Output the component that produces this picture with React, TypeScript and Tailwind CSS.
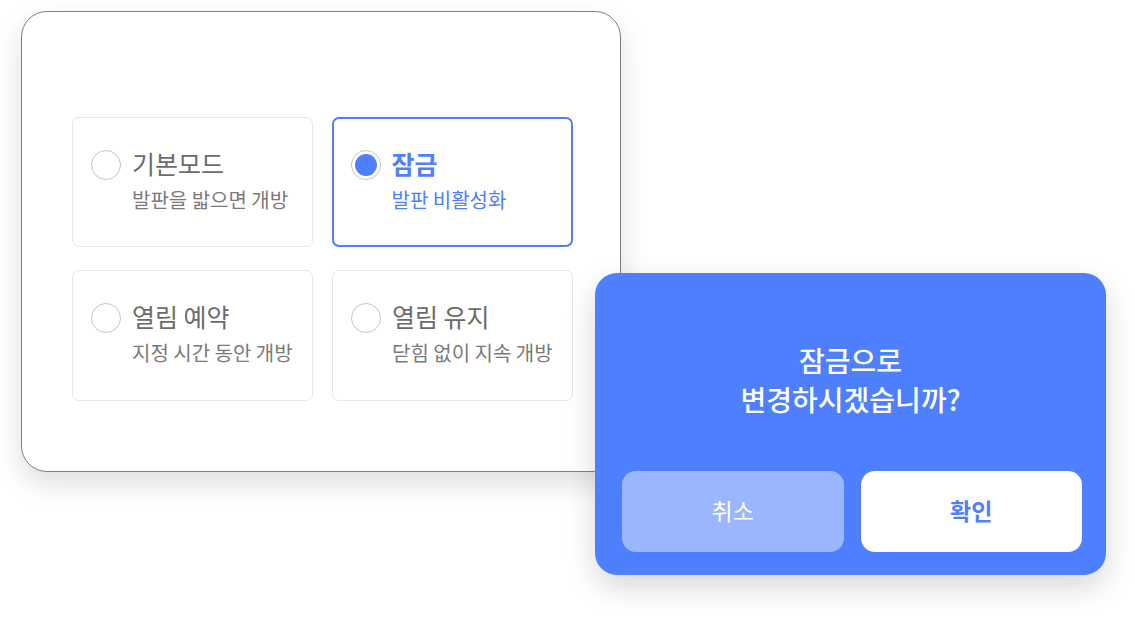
import React from "react";

type Opt = { title: string; desc: string; selected?: boolean };

const options: Opt[] = [
  { title: "기본모드", desc: "발판을 밟으면 개방" },
  { title: "잠금", desc: "발판 비활성화", selected: true },
  { title: "열림 예약", desc: "지정 시간 동안 개방" },
  { title: "열림 유지", desc: "닫힘 없이 지속 개방" },
];

function OptionCard({ o }: { o: Opt }) {
  return (
    <div
      className={
        o.selected
          ? "flex items-start rounded-[7px] border-[2.5px] border-[#4d7fff] pl-[16.5px] pt-[27.5px] bg-white"
          : "flex items-start rounded-[7px] border border-[#e7e7e7] pl-[18px] pt-[29px] bg-white"
      }
    >
      <div className="mt-[3px] flex h-[30px] w-[30px] shrink-0 items-center justify-center rounded-full border-[1.5px] border-[#c4c4c4] bg-white">
        {o.selected && <div className="h-[22px] w-[22px] rounded-full bg-[#4d7fff]" />}
      </div>
      <div className="ml-[11px] flex flex-col">
        <div
          className={
            o.selected
              ? "text-[25px] leading-[32px] font-bold text-[#4d7fff]"
              : "text-[25px] leading-[32px] font-normal text-[#6b6b6b]"
          }
        >
          {o.title}
        </div>
        <div
          className={
            o.selected
              ? "mt-[7px] text-[20px] leading-[28px] text-[#4d7fff]"
              : "mt-[7px] text-[20px] leading-[28px] text-[#7a7a7a]"
          }
        >
          {o.desc}
        </div>
      </div>
    </div>
  );
}

export default function App() {
  return (
    <div className="relative h-[622px] w-[1135px] overflow-hidden bg-white pl-[21px] pt-[11px] font-['Noto_Sans_CJK_KR','Noto_Sans',sans-serif]">
      <div className="h-[461px] w-[600px] rounded-[26px] border border-[#7f7f7f] bg-white pl-[50px] pt-[105px] shadow-[0_12px_28px_rgba(0,0,0,0.13)]">
        <div className="grid grid-cols-[241px_241px] grid-rows-[130px_131px] gap-x-[19px] gap-y-[23px]">
          {options.map((o) => (
            <OptionCard key={o.title} o={o} />
          ))}
        </div>
      </div>

      <div className="absolute left-[595px] top-[273px] flex h-[302px] w-[511px] flex-col rounded-[22px] bg-[#4d7fff] shadow-[0_12px_30px_rgba(0,0,0,0.16)]">
        <div className="pt-[68px] text-center text-[28px] font-medium leading-[39px] text-white">
          <div>잠금으로</div>
          <div>변경하시겠습니까?</div>
        </div>
        <div className="mt-auto flex gap-[17px] pb-[23px] pl-[27px] pr-[24px]">
          <div className="flex h-[81px] flex-1 items-center justify-center rounded-[14px] bg-[#99b6ff] pb-[3px] text-[23px] text-white">
            취소
          </div>
          <div className="flex h-[81px] flex-1 items-center justify-center rounded-[14px] bg-white pb-[3px] text-[23px] font-bold text-[#4d7fff]">
            확인
          </div>
        </div>
      </div>
    </div>
  );
}
